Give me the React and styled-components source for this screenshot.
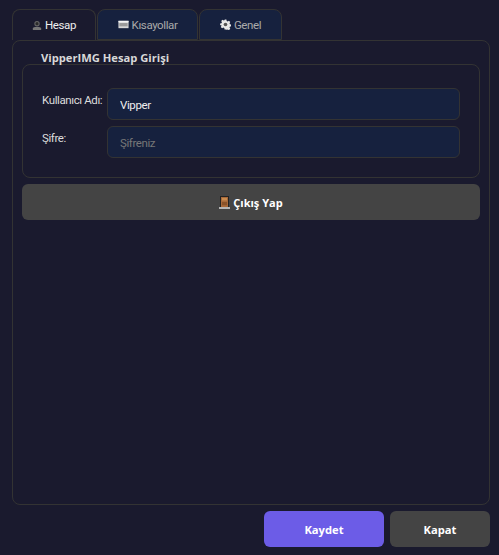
import React from "react";
import styled, { createGlobalStyle } from "styled-components";

const Global = createGlobalStyle`
  html, body { margin: 0; padding: 0; background: #1a1a2e; }
  * { box-sizing: border-box; }
`;

const Window = styled.div`
  width: 499px;
  height: 555px;
  padding: 9px 9px 8px 12px;
  display: flex;
  flex-direction: column;
  background: #1a1a2e;
  font-family: "Roboto", "Open Sans", sans-serif;
  font-size: 11.5px;
  letter-spacing: -0.4px;
  overflow: hidden;
`;

const TabBar = styled.div`
  display: flex;
  height: 31px;
  flex: none;
  gap: 1px;
`;

const Tab = styled.div`
  width: ${(p) => p.$w}px;
  height: 31px;
  display: flex;
  align-items: center;
  justify-content: center;
  gap: 3px;
  border: 1px solid #333;
  border-bottom: ${(p) => (p.$active ? "none" : "1px solid #333")};
  border-radius: 8px 8px 0 0;
  background: ${(p) => (p.$active ? "#1a1a2e" : "#16213e")};
  color: ${(p) => (p.$active ? "#eeeeee" : "#aaaaaa")};
`;

const Panel = styled.div`
  flex: 1;
  min-height: 0;
  display: flex;
  flex-direction: column;
  gap: 6px;
  padding: 23px 9px 0;
  border: 1px solid #333;
  border-radius: 8px;
`;

const Group = styled.div`
  position: relative;
  padding: 23px 19px 19px 19px;
  height: 114px;
  flex: none;
  display: flex;
  flex-direction: column;
  gap: 6px;
  border: 1px solid #333;
  border-radius: 8px;
`;

const GroupTitle = styled.div`
  position: absolute;
  left: 18px;
  top: -14px;
  font-family: "Open Sans", sans-serif;
  font-weight: 700;
  font-size: 11.2px;
  letter-spacing: 0;
  line-height: 14px;
  color: #d8d8d8;
`;

const Row = styled.div`
  display: flex;
  align-items: flex-start;
  height: 32px;
`;

const Label = styled.label`
  width: 65px;
  flex: none;
  line-height: 16px;
  padding-top: 4px;
  color: #dddddd;
  white-space: nowrap;
`;

const Field = styled.input`
  flex: 1;
  min-width: 0;
  height: 32px;
  padding: 2px 11px 0 12px;
  border: 1px solid #333;
  border-radius: 6px;
  background: #16213e;
  color: #eeeeee;
  font: inherit;
  letter-spacing: inherit;
  outline: none;
  &::placeholder { color: #777777; opacity: 1; }
`;

const LogoutButton = styled.button`
  flex: none;
  height: 36px;
  display: flex;
  align-items: center;
  justify-content: center;
  gap: 3px;
  border: none;
  border-radius: 6px;
  background: #444444;
  color: #ffffff;
  font-family: "Open Sans", sans-serif;
  font-size: 11px;
  font-weight: 700;
  letter-spacing: 0;
`;

const Footer = styled.div`
  flex: none;
  display: flex;
  justify-content: flex-end;
  gap: 6px;
  margin-top: 6px;
`;

const FooterButton = styled.button`
  width: ${(p) => p.$w}px;
  height: 36px;
  border: none;
  border-radius: 6px;
  background: ${(p) => p.$bg};
  color: #ffffff;
  font-family: "Open Sans", sans-serif;
  font-size: 11.2px;
  font-weight: 700;
  letter-spacing: 0;
`;

const Bust = () => (
  <svg width="10" height="11" viewBox="0 0 12 12">
    <circle cx="6" cy="3.8" r="3.2" fill="#666666" />
    <circle cx="6" cy="3.8" r="1.9" fill="#2a2a2a" />
    <path d="M1 11.5V9.6C1 8.3 3 7.4 6 7.4s5 .9 5 2.2v1.9z" fill="#777777" />
  </svg>
);

const Card = () => (
  <svg width="11" height="11" viewBox="0 0 12 12">
    <rect x="0.5" y="2" width="11" height="8" fill="#d8d8d8" />
    <rect x="0.5" y="2" width="11" height="1.6" fill="#f5f5f5" />
    <rect x="1.5" y="4.4" width="9" height="3.6" fill="#9a9a9a" />
  </svg>
);

const Gear = () => (
  <svg width="11" height="11" viewBox="0 0 12 12">
    <path
      d="M5 .6h2l.3 1.5 1.1.5L9.7 1.8l1.5 1.5-.8 1.3.5 1.1 1.5.3v2l-1.5.3-.5 1.1.8 1.3-1.5 1.5-1.3-.8-1.1.5L7 11.4H5l-.3-1.5-1.1-.5-1.3.8-1.5-1.5.8-1.3-.5-1.1L.1 7V5l1.5-.3.5-1.1-.8-1.3 1.5-1.5 1.3.8 1.1-.5z"
      fill="#e8e8e8"
    />
    <circle cx="6" cy="6" r="2" fill="#555" />
  </svg>
);

const Door = () => (
  <svg width="11" height="13" viewBox="0 0 11 13">
    <rect x="1" y="0" width="9" height="11" fill="#222222" />
    <rect x="2" y="1" width="7" height="10" fill="#a8693a" />
    <rect x="3" y="2" width="5" height="2.4" fill="#c98c50" />
    <rect x="3" y="6" width="5" height="3.2" fill="#8a5228" />
    <rect x="0" y="11" width="11" height="2" fill="#b5b5b5" />
  </svg>
);

export default function App() {
  return (
    <Window>
      <Global />
      <TabBar>
        <Tab $active $w={84}><Bust />Hesap</Tab>
        <Tab $w={101}><Card />Kısayollar</Tab>
        <Tab $w={83}><Gear />Genel</Tab>
      </TabBar>
      <Panel>
        <Group>
          <GroupTitle>VipperIMG Hesap Girişi</GroupTitle>
          <Row>
            <Label>Kullanıcı Adı:</Label>
            <Field defaultValue="Vipper" />
          </Row>
          <Row>
            <Label>Şifre:</Label>
            <Field placeholder="Şifreniz" type="password" />
          </Row>
        </Group>
        <LogoutButton><Door />Çıkış Yap</LogoutButton>
      </Panel>
      <Footer>
        <FooterButton $w={120} $bg="#6c5ce7">Kaydet</FooterButton>
        <FooterButton $w={100} $bg="#444444">Kapat</FooterButton>
      </Footer>
    </Window>
  );
}
